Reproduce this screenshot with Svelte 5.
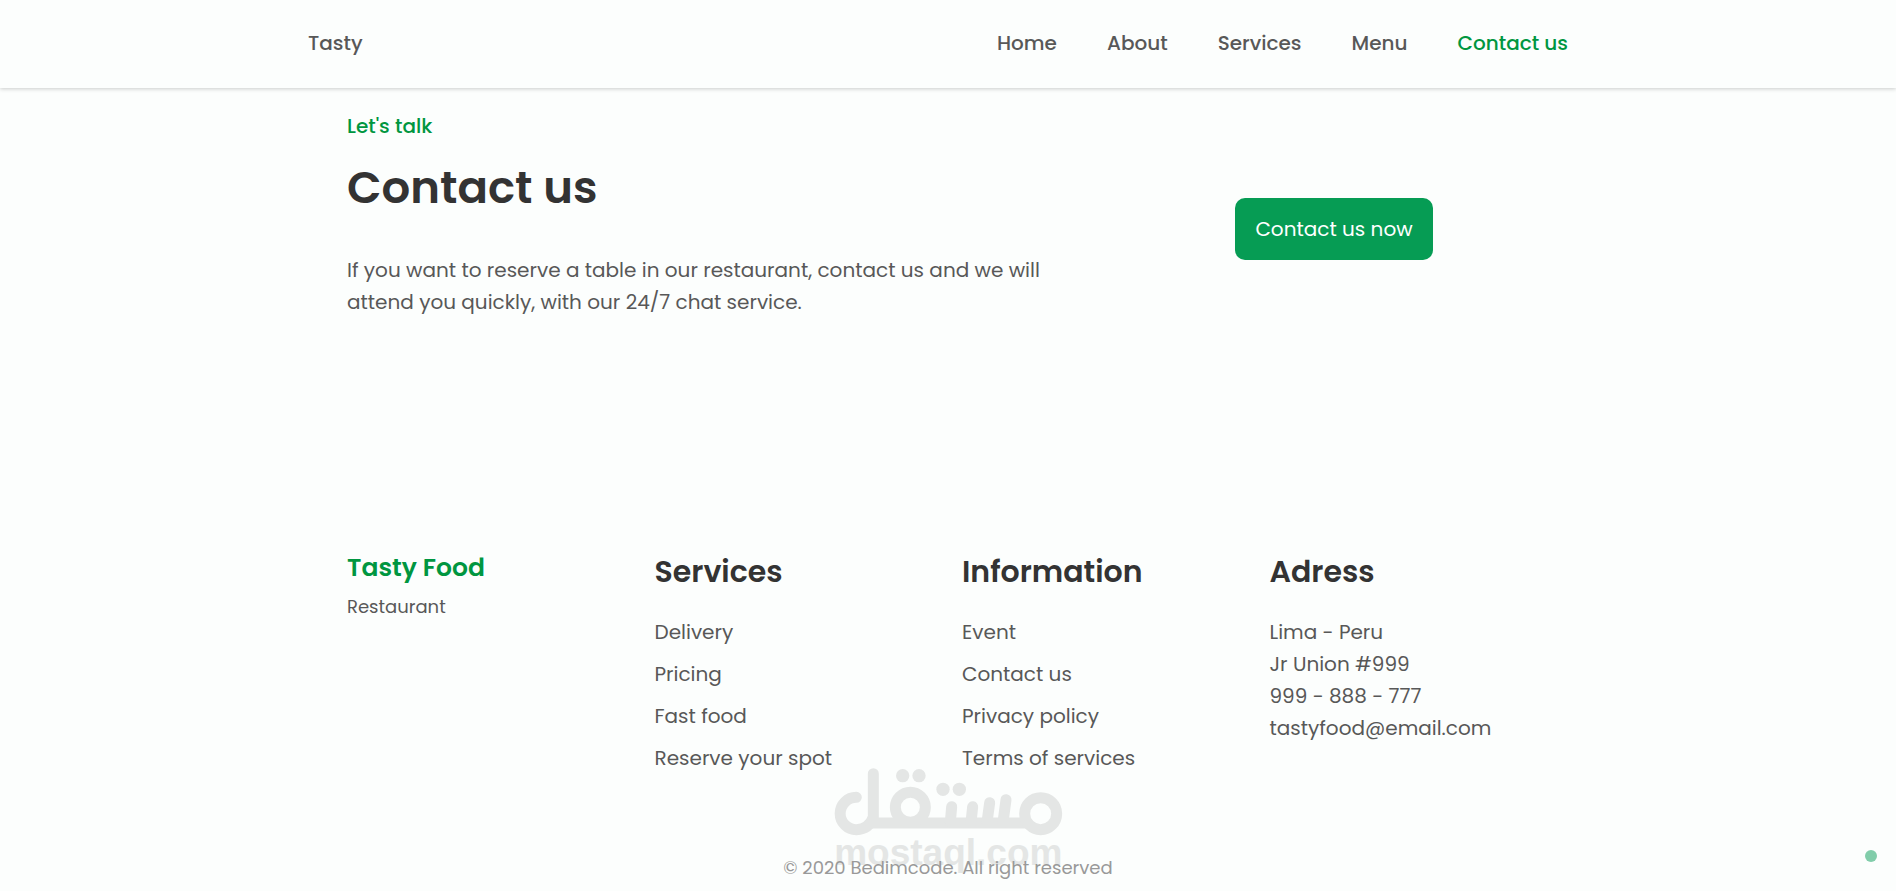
<script>
    const nav = ['Home', 'About', 'Services', 'Menu', 'Contact us']
    let active = 'Contact us'

    const columns = [
        {title: 'Services', links: ['Delivery', 'Pricing', 'Fast food', 'Reserve your spot']},
        {title: 'Information', links: ['Event', 'Contact us', 'Privacy policy', 'Terms of services']}
    ]

    const address = ['Lima - Peru', 'Jr Union #999', '999 - 888 - 777', 'tastyfood@email.com']
</script>

<header>
    <nav>
        <a class="brand" href="#home">Tasty</a>
        <ul>
            {#each nav as item (item)}
                <li>
                    <a href="#{item}" class:active={item === active} on:click={() => active = item}>{item}</a>
                </li>
            {/each}
        </ul>
    </nav>
</header>

<main>
    <section class="contact">
        <div class="text">
            <span class="subtitle">Let's talk</span>
            <h2>Contact us</h2>
            <p>If you want to reserve a table in our restaurant, contact us and we will attend you quickly, with our 24/7 chat service.</p>
        </div>
        <div class="action">
            <button>Contact us now</button>
        </div>
    </section>
</main>

<footer>
    <div class="columns">
        <div>
            <a class="logo" href="#home">Tasty Food</a>
            <span class="tagline">Restaurant</span>
        </div>

        {#each columns as column (column.title)}
            <div>
                <h3>{column.title}</h3>
                <ul>
                    {#each column.links as link (link)}
                        <li><a href="#{link}">{link}</a></li>
                    {/each}
                </ul>
            </div>
        {/each}

        <div>
            <h3>Adress</h3>
            <ul class="address">
                {#each address as line (line)}
                    <li>{line}</li>
                {/each}
            </ul>
        </div>
    </div>

    <svg class="mark" viewBox="70 50 687 321" aria-hidden="true">
        <g fill="none" stroke="#e4e6e5" stroke-width="33" stroke-linecap="round" stroke-linejoin="round">
            <path d="M137 141 A48 48 0 1 0 137 238 Q176 236 188 200 V70" />
            <path d="M180 218 H644" />
            <circle cx="299" cy="171" r="45" />
            <circle cx="690" cy="190" r="48" />
            <path d="M423 169 L419 216 M486 169 L481 216 M537 157 L529 216 M586 148 L577 216" />
        </g>
        <g fill="#e4e6e5">
            <circle cx="276" cy="76" r="20" />
            <circle cx="325" cy="76" r="20" />
            <circle cx="397" cy="117" r="20" />
            <circle cx="446" cy="117" r="20" />
            <text x="413" y="344" text-anchor="middle">mostaql.com</text>
        </g>
    </svg>

    <p class="copy">© 2020 Bedimcode. All right reserved</p>
</footer>

<span class="dot"></span>

<style>
    :global(body) {
        background: #fcfefd;
        color: #585858;
        font-family: Poppins, Inter, sans-serif;
        font-size: 20px;
        line-height: 32px;
    }

    ul {
        list-style: none;
        margin: 0;
        padding: 0;
    }

    a {
        color: inherit;
        text-decoration: none;
    }

    h2, h3 {
        color: #333;
        font-weight: 600;
    }

    header {
        box-shadow: 0 1px 4px rgba(0, 0, 0, 0.2);
    }

    nav {
        display: flex;
        justify-content: space-between;
        align-items: center;
        box-sizing: border-box;
        max-width: 1280px;
        margin: 0 auto;
        padding: 27px 20px 29px 0;
        font-weight: 500;
    }

    nav ul {
        display: flex;
        gap: 50px;
    }

    .active, .subtitle, .logo {
        color: #009640;
    }

    .contact, .columns {
        max-width: 1202px;
        margin: 0 auto;
    }

    .contact {
        display: grid;
        grid-template-columns: 720px 1fr;
        gap: 52px;
        padding-top: 22px;
    }

    .subtitle {
        display: block;
        font-weight: 500;
    }

    h2 {
        margin: 18px 0 38px;
        font-size: 45px;
        line-height: 56px;
    }

    .contact p {
        margin: 0 0 30px;
    }

    .action {
        display: flex;
        justify-content: center;
        align-items: center;
    }

    button {
        padding: 15px 20px;
        border: none;
        border-radius: 10px;
        background: #069c54;
        color: #fff;
        font: inherit;
        cursor: pointer;
    }

    footer {
        position: relative;
        padding: 204px 0 11px;
    }

    .columns {
        display: grid;
        grid-template-columns: repeat(4, 1fr);
        gap: 28px;
    }

    .logo, .tagline {
        display: block;
    }

    .logo {
        font-size: 25px;
        font-weight: 600;
    }

    .tagline {
        margin-top: 7px;
        font-size: 18px;
    }

    h3 {
        margin: 0 0 24px;
        font-size: 30px;
        line-height: 40px;
    }

    .columns li {
        margin-bottom: 10px;
    }

    .columns .address li {
        margin-bottom: 0;
    }

    .mark {
        position: absolute;
        left: 50%;
        bottom: 17px;
        width: 229px;
        height: 107px;
        margin-left: -114px;
    }

    .mark text {
        font-family: 'Liberation Sans', Arial, sans-serif;
        font-size: 111px;
        font-weight: 700;
    }

    .copy {
        position: relative;
        margin: 72px 0 0;
        color: #999;
        font-size: 18px;
        line-height: 24px;
        text-align: center;
    }

    .dot {
        position: fixed;
        right: 19px;
        bottom: 29px;
        width: 12px;
        height: 12px;
        border-radius: 50%;
        background: #81cdaa;
    }
</style>
